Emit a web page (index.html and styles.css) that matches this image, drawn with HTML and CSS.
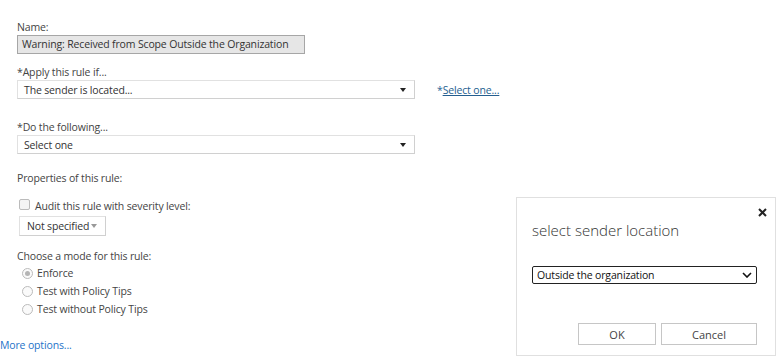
FILE: index.html
```html
<!DOCTYPE html>
<html lang="en">
<head>
    <meta charset="UTF-8">
    <title>New rule</title>
    <link rel="stylesheet" href="styles.css">
</head>
<body>
    <div class="rule-form">
        <div class="field">
            <div class="label">Name:</div>
            <div class="text-input readonly">Warning: Received from Scope Outside the Organization</div>
        </div>

        <div class="field apply">
            <div class="label">*Apply this rule if...</div>
            <div class="row">
                <div class="drop wide">
                    <span>The sender is located...</span>
                    <span class="caret"></span>
                </div>
                <a class="select-link" href="#">*<u>Select one...</u></a>
            </div>
        </div>

        <div class="field">
            <div class="label">*Do the following...</div>
            <div class="drop wide">
                <span>Select one</span>
                <span class="caret"></span>
            </div>
        </div>

        <div class="field props">
            <div class="label">Properties of this rule:</div>
            <label class="check-line">
                <span class="checkbox"></span>
                Audit this rule with severity level:
            </label>
            <div class="drop small">
                <span>Not specified</span>
                <span class="caret light"></span>
            </div>
        </div>

        <div class="field modes">
            <div class="label">Choose a mode for this rule:</div>
            <div class="radio-line"><span class="radio checked"></span>Enforce</div>
            <div class="radio-line"><span class="radio"></span>Test with Policy Tips</div>
            <div class="radio-line"><span class="radio"></span>Test without Policy Tips</div>
        </div>

        <a class="more-link" href="#">More options...</a>
    </div>

    <div class="dialog">
        <button class="close-btn" aria-label="Close">
            <svg width="9" height="9" viewBox="0 0 9 9"><path d="M1 1 L8 8 M8 1 L1 8" stroke="#222" stroke-width="2"/></svg>
        </button>
        <h2 class="dialog-title">select sender location</h2>
        <div class="dialog-select">
            <span>Outside the organization</span>
            <svg width="10" height="6" viewBox="0 0 10 6"><path d="M1 1 L5 5 L9 1" fill="none" stroke="#111" stroke-width="1.6"/></svg>
        </div>
        <div class="dialog-buttons">
            <button class="btn ok">OK</button>
            <button class="btn cancel">Cancel</button>
        </div>
    </div>
</body>
</html>
```

FILE: styles.css
```css
body {
    margin: 0;
    font-family: "Open Sans", "Noto Sans", sans-serif;
    font-size: 10.5px;
    letter-spacing: -0.15px;
    color: #444;
    background-color: #fff;
    width: 780px;
    height: 359px;
    overflow: hidden;
    position: relative;
    white-space: nowrap;
}

.rule-form {
    padding: 20px 0 0 17px;
}

.field {
    margin-bottom: 11px;
}

.label {
    line-height: 15px;
}

.text-input {
    width: 278px;
    height: 17px;
    line-height: 17px;
    padding: 0 4px;
    border: 1px solid #a6a6a6;
    color: #333;
}
.text-input.readonly {
    background-color: #e6e6e6;
}

.row {
    display: flex;
    align-items: center;
}

.drop {
    display: flex;
    align-items: center;
    justify-content: space-between;
    box-sizing: border-box;
    border: 1px solid #e1e1e1;
    border-bottom-color: #d0d0d0;
    border-right-color: #d0d0d0;
    color: #333;
    padding: 0 6px;
}
.drop.wide {
    width: 398px;
    height: 19px;
}
.drop.small {
    width: 87px;
    height: 20px;
    margin-left: 2px;
    font-size: 10.5px;
    padding: 0 6px 0 7px;
}

.caret {
    width: 0;
    height: 0;
    border-left: 3.5px solid transparent;
    border-right: 3.5px solid transparent;
    border-top: 4px solid #222;
    margin-right: 2px;
}
.caret.light {
    border-top-color: #999;
}

.select-link {
    margin-left: 22px;
    color: #2a6496;
    text-decoration: none;
}
.select-link u {
    color: #245e8f;
}

.field.apply {
    margin-bottom: 21px;
}

.props {
    padding-top: 6px;
}
.props .label {
    margin-bottom: 12px;
}

.check-line {
    display: flex;
    align-items: center;
    margin-left: 2px;
    height: 16px;
    margin-bottom: 2px;
}
.checkbox {
    width: 9px;
    height: 9px;
    border: 1px solid #bbb;
    border-radius: 2px;
    background-color: #f4f4f4;
    margin-right: 5px;
    margin-top: -3px;
}

.modes {
    margin-top: 13px;
}
.radio-line {
    display: flex;
    align-items: center;
    height: 18px;
    margin-left: 5px;
}
.radio {
    width: 9px;
    height: 9px;
    border: 1px solid #bbb;
    border-radius: 50%;
    margin-right: 4px;
    background-color: #fafafa;
    position: relative;
}
.radio.checked::after {
    content: "";
    position: absolute;
    left: 2px;
    top: 2px;
    width: 5px;
    height: 5px;
    border-radius: 50%;
    background-color: #b5b5b5;
}

.more-link {
    display: block;
    margin: 20px 0 0 -17px;
    line-height: 15px;
    color: #1e73c9;
    text-decoration: none;
}

/* dialog */
.dialog {
    position: absolute;
    left: 516px;
    top: 197px;
    width: 260px;
    height: 159px;
    border: 1px solid #e0e0e0;
    background-color: #fff;
    box-sizing: border-box;
    padding: 0 18px 0 15px;
}

.close-btn {
    position: absolute;
    right: 8px;
    top: 7px;
    background: none;
    border: none;
    padding: 0;
    cursor: pointer;
}

.dialog-title {
    margin: 22px 0 26px;
    font-size: 15px;
    font-weight: 300;
    color: #333;
    line-height: 20px;
    letter-spacing: 0;
}

.dialog-select {
    display: flex;
    align-items: center;
    justify-content: space-between;
    box-sizing: border-box;
    height: 18px;
    border: 1px solid #222;
    border-radius: 2px;
    padding: 0 4px 0 4px;
    color: #111;
}

.dialog-buttons {
    display: flex;
    justify-content: flex-end;
    gap: 5px;
    margin-top: 39px;
}
.btn {
    height: 22px;
    background-color: #fff;
    border: 1px solid #c6c6c6;
    font-family: inherit;
    font-size: 11px;
    color: #444;
    padding: 0;
}
.btn.ok {
    width: 78px;
}
.btn.cancel {
    width: 96px;
}
```
